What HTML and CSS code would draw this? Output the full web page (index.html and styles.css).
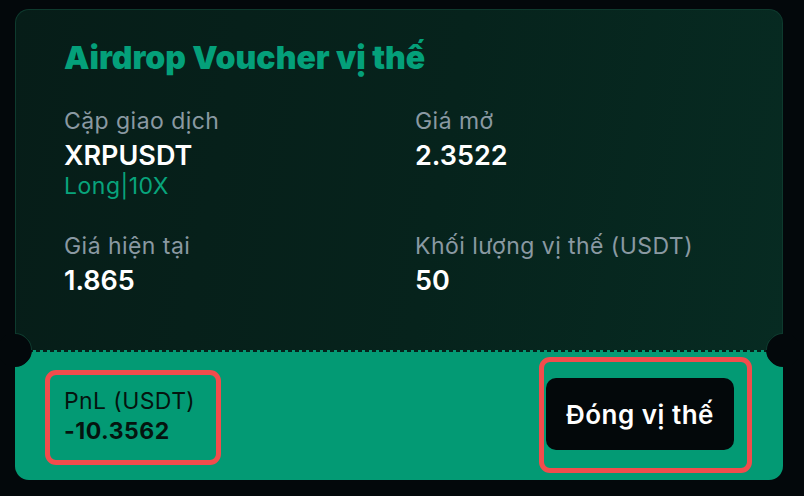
FILE: index.html
```html
<!DOCTYPE html>
<html lang="vi">
<head>
<meta charset="utf-8">
<link rel="stylesheet" href="styles.css">
</head>
<body>
<div class="card">
  <div class="top">
    <h1 class="title">Airdrop Voucher vị thế</h1>
    <div class="grid">
      <div class="cell">
        <div class="label">Cặp giao dịch</div>
        <div class="value">XRPUSDT</div>
        <div class="side">Long|10X</div>
      </div>
      <div class="cell">
        <div class="label">Giá mở</div>
        <div class="value">2.3522</div>
      </div>
      <div class="cell">
        <div class="label">Giá hiện tại</div>
        <div class="value">1.865</div>
      </div>
      <div class="cell">
        <div class="label">Khối lượng vị thế (USDT)</div>
        <div class="value">50</div>
      </div>
    </div>
  </div>
  <div class="bottom">
    <div class="hl pnl">
      <div class="pnl-label">PnL (USDT)</div>
      <div class="pnl-value">-10.3562</div>
    </div>
    <div class="hl action">
      <button class="close-btn">Đóng vị thế</button>
    </div>
  </div>
  <span class="notch notch-left"></span>
  <span class="notch notch-right"></span>
</div>
</body>
</html>
```

FILE: styles.css
```css
* { box-sizing: border-box; }
html, body {
  margin: 0;
  padding: 0;
  background: #03080b;
  width: 804px;
  height: 496px;
  overflow: hidden;
  font-family: Inter, "Noto Sans", sans-serif;
}
.card {
  position: relative;
  margin: 9px 0 0 15px;
  width: 768px;
  height: 471px;
  border-radius: 14px;
  display: flex;
  flex-direction: column;
}
.top {
  height: 341px;
  border: 1px solid #0e3a2e;
  border-bottom: none;
  border-radius: 14px 14px 0 0;
  background: linear-gradient(100deg, #061d18 0%, #06231c 55%, #072b22 100%);
  padding: 28px 48px 0 48px;
}
.title {
  margin: 0;
  font-size: 32px;
  line-height: 40px;
  font-weight: 900;
  letter-spacing: 0;
  color: #04a07a;
}
.grid {
  margin-top: 29px;
  display: grid;
  grid-template-columns: 351px 1fr;
  row-gap: 32px;
}
.label {
  font-size: 23px;
  line-height: 28px;
  letter-spacing: 0.45px;
  color: #8a99a2;
  height: 28px;
}
.value {
  font-size: 27px;
  line-height: 34px;
  font-weight: 600;
  color: #ffffff;
  margin-top: 4px;
}
.side {
  font-size: 23px;
  line-height: 28px;
  letter-spacing: 0.5px;
  color: #08a47c;
  margin-top: -1px;
}
.bottom {
  flex: 1;
  background-color: #039a74;
  background-image: repeating-linear-gradient(90deg, #06201a 0 4px, transparent 4px 7px);
  background-size: 100% 2px;
  background-repeat: no-repeat;
  border-radius: 0 0 14px 14px;
  display: flex;
  align-items: center;
  justify-content: space-between;
  padding: 0 31px 0 30px;
}
.hl {
  border: 5px solid #f24c4c;
  border-radius: 11px;
}
.pnl {
  width: 176px;
  height: 95px;
  padding: 12px 0 0 14px;
  margin-top: 4px;
}
.pnl-label {
  font-size: 23px;
  line-height: 28px;
  letter-spacing: 0.4px;
  color: #05140f;
}
.pnl-value {
  font-size: 23px;
  line-height: 28px;
  font-weight: 700;
  letter-spacing: 0.5px;
  color: #05140f;
  margin-top: 2px;
}
.action {
  width: 213px;
  height: 116px;
  padding: 16px 0 0 2px;
}
.close-btn {
  width: 188px;
  height: 72px;
  border: none;
  border-radius: 10px;
  background: #03080a;
  color: #ffffff;
  font-family: Inter, "Noto Sans", sans-serif;
  font-size: 26px;
  font-weight: 600;
  letter-spacing: 0.5px;
  padding: 0;
}
.notch {
  position: absolute;
  top: 324px;
  width: 34px;
  height: 34px;
  border-radius: 50%;
  background: #03080b;
  border: 1px solid transparent;
  border-top-color: #0e3a2e;
}
.notch-left {
  left: -17px;
  transform: rotate(45deg);
}
.notch-right {
  right: -17px;
  transform: rotate(-45deg);
}
```
